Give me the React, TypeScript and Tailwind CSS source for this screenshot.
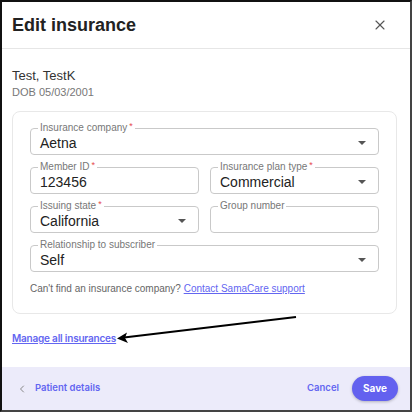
import { X, ChevronLeft } from "lucide-react";

type FieldProps = {
    label: string;
    value?: string;
    required?: boolean;
    select?: boolean;
    half?: boolean;
};

const Caret = () => (
    <svg width="8" height="4" viewBox="0 0 8 4" className="shrink-0">
        <path d="M0 0 L8 0 L4 4 Z" fill="#555" />
    </svg>
);

// outlined input with the label sitting on the top border
const Field = ({ label, value, required, select, half }: FieldProps) => (
    <div
        className={
            half
                ? "relative flex-1 h-[27px] rounded-[4px] border border-[#c9c9c9] flex items-center pl-[9px] pr-[12px] pt-[3px]"
                : "relative w-full h-[27px] rounded-[4px] border border-[#c9c9c9] flex items-center pl-[9px] pr-[12px] pt-[3px]"
        }
    >
        <span className="absolute -top-[6px] left-[7px] bg-white px-[2px] text-[10px] leading-[10px] text-[#777]">
            {label}
            {required && <span className="text-[#e5484d] ml-[2px] relative -top-[2px] text-[9px]">*</span>}
        </span>
        <span className="flex-1 text-[14px] leading-[15px] text-[#222]">{value}</span>
        {select && <Caret />}
    </div>
);

const App = () => {
    return (
        <div className="relative w-[412px] h-[412px] bg-white" style={{ fontFamily: "'Liberation Sans', Arial, sans-serif" }}>
            <div className="w-full h-full border-2 border-t-[#111] border-l-[#111] border-r-[#444] border-b-[#444] flex flex-col">
                {/* header */}
                <div className="h-[47px] shrink-0 border-b border-[#e6e6e6] flex items-center justify-between pl-[10px] pr-[22px]">
                    <h1 className="text-[18px] font-bold text-[#222] mt-[1px]">Edit insurance</h1>
                    <X size={16} strokeWidth={1.6} className="text-[#555]" />
                </div>

                {/* body */}
                <div className="flex-1 px-[10px] pt-[19px]">
                    <p className="text-[13px] leading-[16px] text-[#333]">Test, TestK</p>
                    <p className="text-[11px] leading-[14px] text-[#777] mt-[1px]">DOB 05/03/2001</p>

                    <div className="mt-[12px] rounded-[8px] border border-[#e8e8e8] px-[17px] pt-[16px] pb-[18px] w-[385px]">
                        <div className="flex flex-col gap-3">
                            <Field label="Insurance company" value="Aetna" required select />
                            <div className="flex gap-[11px]">
                                <Field label="Member ID" value="123456" required half />
                                <Field label="Insurance plan type" value="Commercial" required select half />
                            </div>
                            <div className="flex gap-[11px]">
                                <Field label="Issuing state" value="California" required select half />
                                <Field label="Group number" half />
                            </div>
                            <Field label="Relationship to subscriber" value="Self" select />
                        </div>
                        <p className="mt-[11px] text-[10px] leading-[12px] text-[#666]">
                            Can't find an insurance company?{" "}
                            <a className="text-[#6366f1] underline">Contact SamaCare support</a>
                        </p>
                    </div>

                    <a
                        className="block mt-[17px] text-[10px] leading-[14px] tracking-[-0.2px] font-semibold text-[#6366f1] underline"
                        style={{ fontFamily: "Inter, sans-serif" }}
                    >
                        Manage all insurances
                    </a>
                </div>

                {/* footer */}
                <div
                    className="h-[43px] shrink-0 bg-[#ecebfa] flex items-center pl-[14px] pr-[12px]"
                    style={{ fontFamily: "Inter, sans-serif" }}
                >
                    <ChevronLeft size={12} strokeWidth={2} className="text-[#888]" />
                    <span className="ml-[7px] text-[9.5px] font-semibold text-[#6366f1]">Patient details</span>
                    <span className="ml-auto text-[9.5px] font-semibold text-[#6366f1]">Cancel</span>
                    <button className="ml-[13px] h-[25px] w-[46px] rounded-full bg-[#6361ef] text-white text-[10px] font-bold shadow-[0_1px_3px_rgba(0,0,0,0.25)]">
                        Save
                    </button>
                </div>
            </div>

            {/* pointer arrow */}
            <svg className="absolute inset-0 pointer-events-none" width="412" height="412">
                <line x1="296" y1="317" x2="124" y2="337.5" stroke="#000" strokeWidth="2" />
                <path d="M117 338.5 L127 332.5 L125 338 L128 343 Z" fill="#000" />
            </svg>
        </div>
    );
};

export default App;
